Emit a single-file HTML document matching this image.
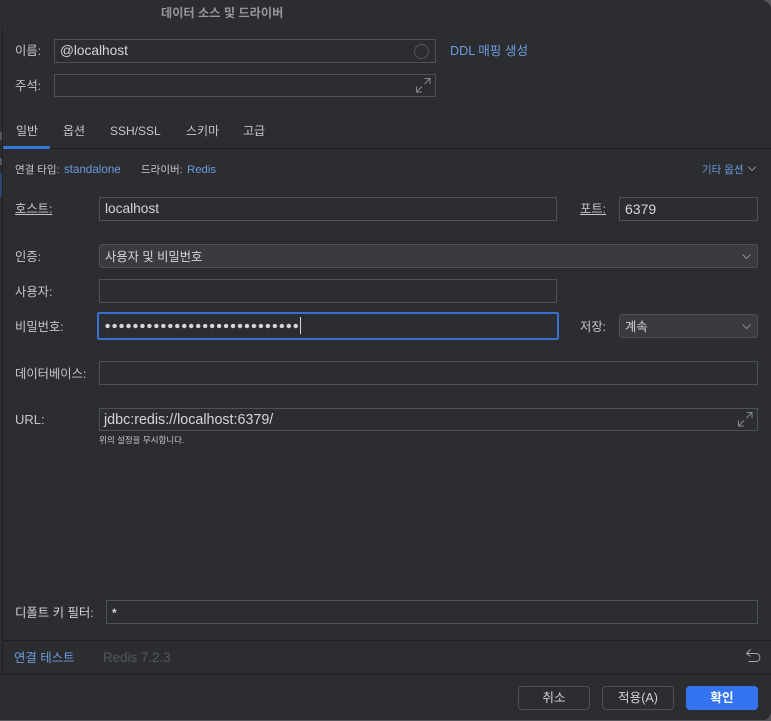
<!DOCTYPE html>
<html lang="ko">
<head>
<meta charset="utf-8">
<style>
html,body{margin:0;padding:0;background:#2b2d30}
#p{position:relative;width:771px;height:721px;overflow:hidden;background:#2b2d30;font-family:"Liberation Sans","Noto Sans CJK KR",sans-serif;color:#c4c6ca;font-size:12.3px}
#p div{position:absolute;white-space:nowrap}
.l{line-height:16px;height:16px;margin-top:1px}
.i{box-sizing:border-box;border:1px solid #4e5157;background:#2b2d30}
.s{box-sizing:border-box;border:1px solid #4e5157;background:#393b40;border-radius:3px}
.v{color:#d5d6d9;font-size:13.7px;line-height:16px;height:16px;margin-top:1px}
.b{color:#6f9be0}
.h{position:absolute;background:#1e1f22;height:1px}
.btn{box-sizing:border-box;border:1px solid #4e5157;border-radius:4px;text-align:center;line-height:23px;height:24px;width:72px;top:686px;color:#d0d1d4;font-size:12.6px}
svg{position:absolute;fill:none}
</style>
</head>
<body>
<div id="p">
<div style="left:2px;top:28px;width:1px;height:646px;background:#1e1f22"></div>
<div style="left:0;top:173px;width:2px;height:24px;background:#2e436e"></div>
<div style="left:0;top:132px;width:2px;height:8px;background:#55575b"></div>
<div style="left:0;top:158px;width:2px;height:7px;background:#55575b"></div>

<div class="l" style="left:161px;top:4px;color:#97989b;font-weight:bold;font-size:12.2px">데이터 소스 및 드라이버</div>

<div class="l" style="left:15px;top:42px">이름:</div>
<div class="i" style="left:54px;top:39px;width:382px;height:24px"></div>
<div class="v" style="left:60px;top:42px">@localhost</div>
<svg style="left:413px;top:43px" width="17" height="17"><circle cx="8.5" cy="8.5" r="7" stroke="#55575b"/></svg>
<div class="l b" style="left:450px;top:42px;font-size:12.6px">DDL 매핑 생성</div>

<div class="l" style="left:15px;top:77px">주석:</div>
<div class="i" style="left:54px;top:74px;width:382px;height:23px"></div>
<svg style="left:415px;top:77px" width="16" height="16" stroke="#8a8c90" stroke-width="1"><path d="M9.5 1.5H15V7M15 1.5L9.5 7M1.5 9.5V15H7M1.5 15L7 9.5"/></svg>

<div class="l" style="left:16px;top:122px;color:#c9cacd;font-size:12px">일반</div>
<div class="l" style="left:63px;top:122px;font-size:12px">옵션</div>
<div class="l" style="left:110px;top:122px;font-size:12px">SSH/SSL</div>
<div class="l" style="left:186px;top:122px;font-size:12px">스키마</div>
<div class="l" style="left:243px;top:122px;font-size:12px">고급</div>
<div style="left:3px;top:146px;width:47px;height:3px;background:#3574d8;border-radius:1px"></div>
<div class="h" style="left:50px;top:148px;width:721px"></div>

<div class="l" style="left:15px;top:161px;font-size:10.5px">연결 타입:</div>
<div class="l b" style="left:64px;top:161px;font-size:11.6px">standalone</div>
<div class="l" style="left:141px;top:161px;font-size:10.5px">드라이버:</div>
<div class="l b" style="left:187px;top:161px;font-size:11.4px">Redis</div>
<div class="l b" style="left:702px;top:161px;font-size:10.5px">기타 옵션</div>
<svg style="left:747px;top:165px" width="10" height="8" stroke="#8a8c90"><path d="M1 1.5L5 5.5L9 1.5"/></svg>

<div class="l" style="left:15px;top:200px;text-decoration:underline">호스트:</div>
<div class="i" style="left:99px;top:197px;width:458px;height:24px"></div>
<div class="v" style="left:105px;top:200px">localhost</div>
<div class="l" style="left:580px;top:200px;text-decoration:underline">포트:</div>
<div class="i" style="left:619px;top:197px;width:139px;height:24px"></div>
<div class="v" style="left:625px;top:200px;font-size:14px">6379</div>

<div class="l" style="left:15px;top:248px">인증:</div>
<div class="s" style="left:99px;top:244px;width:659px;height:24px"></div>
<div class="l" style="left:105px;top:248px;color:#d5d6d9">사용자 및 비밀번호</div>
<svg style="left:741px;top:253px" width="11" height="8" stroke="#8a8c90"><path d="M1.5 1.5L5.5 5.5L9.5 1.5"/></svg>

<div class="l" style="left:15px;top:283px">사용자:</div>
<div class="i" style="left:99px;top:279px;width:458px;height:24px"></div>

<div class="l" style="left:15px;top:318px">비밀번호:</div>
<div style="box-sizing:border-box;left:97px;top:312px;width:462px;height:28px;border:2px solid #3a6fd0;border-radius:2px;background:#2b2d30"></div>
<div id="dots" style="left:105px;top:322px;height:8px;width:195px;background-image:radial-gradient(circle at 2.6px 4px,#d5d6d9 2px,transparent 2.4px);background-size:6.97px 8px;background-repeat:repeat-x"></div>
<div style="left:300px;top:317px;width:1px;height:17px;background:#d5d6d9"></div>
<div class="l" style="left:580px;top:318px">저장:</div>
<div class="s" style="left:619px;top:314px;width:139px;height:24px"></div>
<div class="l" style="left:625px;top:318px;color:#d5d6d9">계속</div>
<svg style="left:741px;top:323px" width="11" height="8" stroke="#8a8c90"><path d="M1.5 1.5L5.5 5.5L9.5 1.5"/></svg>

<div class="l" style="left:15px;top:365px">데이터베이스:</div>
<div class="i" style="left:99px;top:361px;width:659px;height:24px"></div>

<div class="l" style="left:15px;top:411px;font-size:13px">URL:</div>
<div class="i" style="left:99px;top:408px;width:659px;height:23px"></div>
<div class="v" style="left:104px;top:411px;font-size:14.3px">jdbc:redis://localhost:6379/</div>
<svg style="left:737px;top:411px" width="16" height="16" stroke="#8a8c90" stroke-width="1"><path d="M9.5 1.5H15V7M15 1.5L9.5 7M1.5 9.5V15H7M1.5 15L7 9.5"/></svg>
<div class="l" style="left:99px;top:431px;font-size:8.5px">위의 설정을 무시합니다.</div>

<div class="l" style="left:15px;top:604px;color:#d0d1d4;font-size:12.4px">디폴트 키 필터:</div>
<div class="i" style="left:106px;top:600px;width:652px;height:24px"></div>
<div class="v" style="left:112px;top:604px;font-weight:bold;font-size:12px">*</div>

<div class="h" style="left:3px;top:640px;width:768px"></div>
<div class="l b" style="left:14px;top:649px;font-size:12.4px">연결 테스트</div>
<div class="l" style="left:103px;top:649px;color:#55585c;font-size:13.4px">Redis 7.2.3</div>
<svg style="left:745px;top:648px" width="17" height="17" stroke="#a4a6a9" stroke-width="1"><path d="M5.5 1.5L1.5 5.5L5.5 8.5M1.5 5.5H11.5C16 5.5 16 13.5 11.5 13.5H3.5"/></svg>
<div class="h" style="left:0;top:674px;width:771px"></div>

<div class="btn" style="left:518px">취소</div>
<div class="btn" style="left:602px">적용(A)</div>
<div class="btn" style="left:686px;background:#3574f0;border-color:#3574f0;color:#fff;font-weight:bold">확인</div>

<div style="left:0;top:720px;width:771px;height:1px;background:#55575b"></div>
<svg style="left:755px;top:705px" width="16" height="16"><path d="M16 6C16 12 12 16 6 16H16Z" fill="#55575b"/></svg>
<svg style="left:759px;top:0" width="12" height="12"><path d="M4 0C8 1 11 4 12 8V0Z" fill="#55575b"/></svg>
</div>
</body>
</html>
